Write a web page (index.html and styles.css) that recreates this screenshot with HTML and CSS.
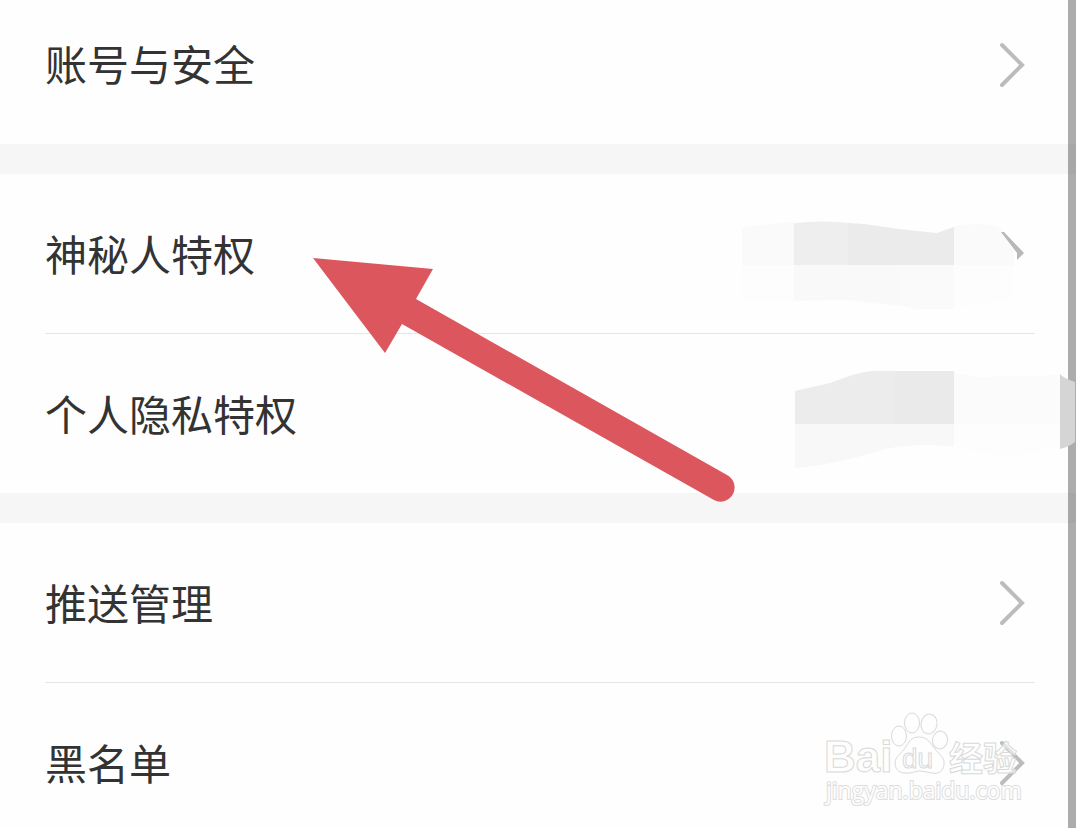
FILE: index.html
```html
<!DOCTYPE html>
<html lang="zh-CN">
  <head>
    <meta charset="utf-8">
    <title>设置</title>
    <link rel="stylesheet" href="styles.css">
  </head>
  <body>
    <main class="settings">
      <section class="group group-first">
        <a class="row" href="#">
          <span class="label">账号与安全</span>
          <svg class="chevron" viewBox="0 0 26 46"><path d="M2 4 L22 24 L2 44"/></svg>
        </a>
      </section>

      <section class="group">
        <a class="row" href="#">
          <span class="label">神秘人特权</span>
          <svg class="smudge" viewBox="740 194 286 120">
            <path fill="#fafafa" d="M742 227 L794 222 V265 H742 Z"/>
            <path fill="#fdfdfd" d="M742 265 H794 V302 L742 300 Z"/>
            <path fill="#eeeeee" d="M794 223 Q822 220 849 223 V265 H794 Z"/>
            <path fill="#ebebeb" d="M848 223 L864 224 Q900 230 937 233 L954 227 V265 H848 Z"/>
            <path fill="#f9f9f9" d="M794 265 H902 V306 L846 300 L794 301 Z"/>
            <path fill="#fafafa" d="M902 265 H954 V309 H915 L902 306 Z"/>
            <path fill="#fafafa" d="M954 226 Q978 222 998 226 L1014 248 V265 H954 Z"/>
            <path fill="#fdfdfd" d="M954 265 H1014 V298 L954 308 Z"/>
            <path fill="#b8b8b8" d="M1001 232 L1004 232 L1024 253 L1017 260 L1017 253 Z"/>
          </svg>
        </a>
        <a class="row" href="#">
          <span class="label">个人隐私特权</span>
          <svg class="smudge" viewBox="740 354 286 120">
            <path fill="#ececec" d="M795 391 L830 383 Q858 372 872 371 H896 V424 H795 Z"/>
            <path fill="#eaeaea" d="M895 371 H954 V424 H895 Z"/>
            <path fill="#f8f8f8" d="M795 424 H954 V447 Q920 442 885 449 Q835 465 795 468 Z"/>
            <path fill="#fbfbfb" d="M954 373 L980 377 L1060 375 V424 H954 Z"/>
            <path fill="#fdfdfd" d="M954 424 H1060 V446 L1008 458 L954 447 Z"/>
          </svg>
        </a>
        <svg class="arrow" viewBox="313 258 422 244">
          <path d="M313 258 L433 269 L416 299 L727 475 A13.5 13.5 0 0 1 714 500 L402 324 L385 353 Z"/>
        </svg>
      </section>

      <section class="group">
        <a class="row" href="#">
          <span class="label">推送管理</span>
          <svg class="chevron" viewBox="0 0 26 46"><path d="M2 3 L22 23 L2 43"/></svg>
        </a>
        <a class="row" href="#">
          <span class="label">黑名单</span>
          <svg class="chevron" viewBox="0 0 26 46"><path d="M2 3 L22 23 L2 43"/></svg>
        </a>
        <svg class="watermark" viewBox="820 706 204 104">
          <text class="mark-bold" x="824" y="772" font-size="44">Bai</text>
          <ellipse cx="899" cy="736" rx="7.5" ry="10"/>
          <ellipse cx="912" cy="723" rx="7.5" ry="10"/>
          <ellipse cx="929" cy="724" rx="8" ry="10" transform="rotate(10 929 724)"/>
          <ellipse cx="940" cy="740" rx="7.5" ry="9" transform="rotate(10 940 740)"/>
          <path d="M919 737 C928 737 931 744 935 749 C940 755 945 758 944 765 C943 772 938 774 932 773 C926 772 923 771 919 771 C915 771 911 774 905 773 C899 773 895 769 895 763 C895 757 901 754 905 748 C909 742 911 737 919 737 Z"/>
          <text class="mark-du" x="902" y="768" font-size="28">du</text>
          <text class="mark-cjk" x="949" y="771" font-size="34">经验</text>
          <text class="mark-url" x="826" y="799" font-size="23">jingyan.baidu.com</text>
        </svg>
      </section>

      <div class="edge"></div>
      <svg class="handle" viewBox="0 0 16 76"><path d="M0 0 Q3 4 15 8 V68 Q9 73 0 75 Z"/></svg>
    </main>
  </body>
</html>
```
FILE: styles.css
```css
body {
  margin: 0;
  font-family: "Noto Sans CJK SC", sans-serif;
  background-color: #f6f6f6;
}

.settings {
  position: relative;
  display: flex;
  flex-direction: column;
  gap: 30px;
  height: 100vh;
  overflow: hidden;
}

.group {
  position: relative;
  flex: none;
  background-color: #fefefe;
}

/* list is scrolled a little under the top edge */
.group-first {
  margin-top: -16px;
}

.row {
  display: flex;
  align-items: center;
  justify-content: space-between;
  height: 159px;
  padding: 0 50px 0 45px;
  color: #333;
  font-size: 42px;
  line-height: 60px;
  text-decoration: none;
}

.group-first .row {
  height: 160px;
}

.row + .row {
  position: relative;
  border-top: 1px solid transparent;
}

.row + .row::before {
  content: "";
  position: absolute;
  top: -1px;
  left: 45px;
  right: 41px;
  height: 1px;
  background-color: #e6e6e6;
}

.label {
  padding-bottom: 2px;
}

.chevron {
  width: 26px;
  height: 46px;
  fill: none;
  stroke: #bcbcbc;
  stroke-width: 4;
  stroke-linecap: round;
}

.smudge {
  width: 286px;
  height: 120px;
  overflow: visible;
}

.arrow {
  position: absolute;
  top: 84px;
  left: 313px;
  width: 422px;
  height: 244px;
  fill: #dc575d;
}

/* Watermark */
.watermark {
  position: absolute;
  top: 183px;
  right: 52px;
  width: 204px;
  height: 104px;
  fill: none;
  stroke: #d9d9d9;
  stroke-width: 1;
  pointer-events: none;
}

.watermark text {
  fill: #fefefe;
  fill-opacity: 0.6;
}

.mark-bold {
  font-family: "Liberation Sans", sans-serif;
  font-weight: bold;
}

.mark-du {
  font-family: "Liberation Sans", sans-serif;
}

.mark-cjk {
  font-family: "Noto Sans CJK SC", sans-serif;
  font-weight: bold;
}

.watermark .mark-url {
  font-family: "Open Sans", sans-serif;
  fill-opacity: 1;
  stroke: #dddddd;
  stroke-width: 2;
  paint-order: stroke;
}

/* Right screen edge */
.edge {
  position: absolute;
  top: 0;
  right: 0;
  bottom: 0;
  width: 8px;
  background-color: rgba(0, 0, 0, 0.32);
}

.handle {
  position: absolute;
  top: 374px;
  right: 0;
  width: 16px;
  height: 76px;
  fill: #d5d5d5;
}
```
